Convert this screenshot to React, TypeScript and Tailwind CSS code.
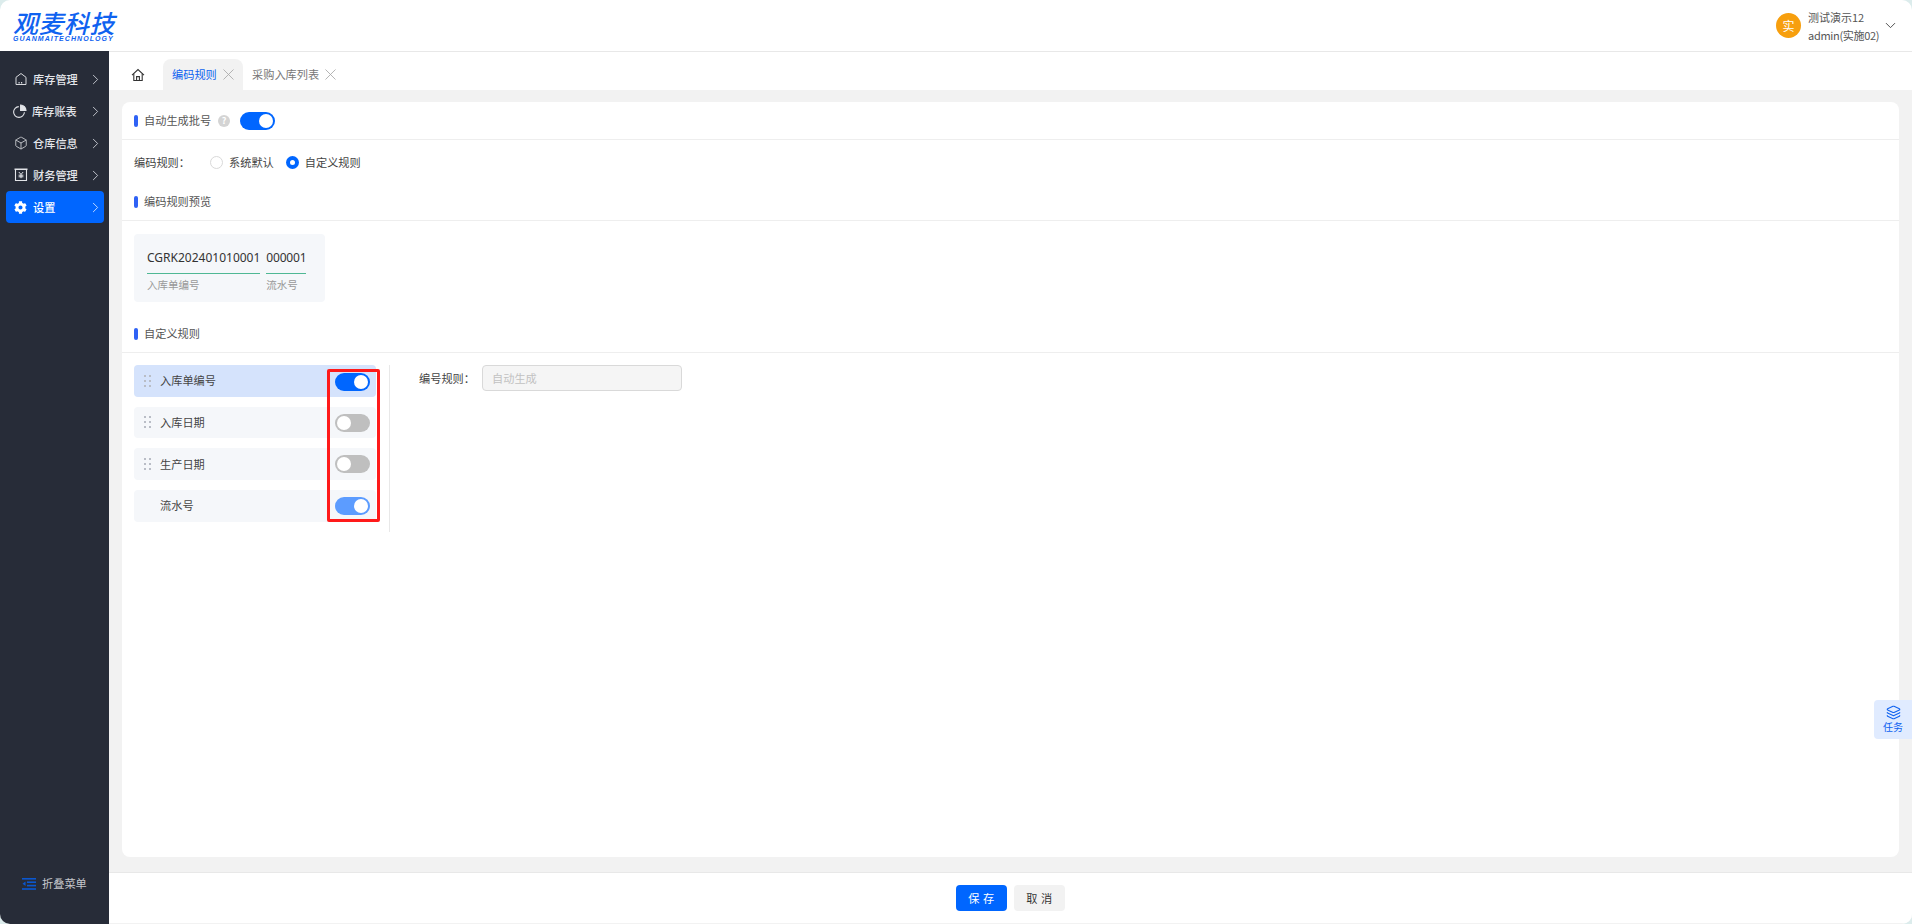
import { ChevronDown, ChevronRight, Box, Layers, X } from 'lucide-react';
import { FaCog } from 'react-icons/fa';

const font = { fontFamily: '"Noto Sans CJK SC", "Noto Sans", sans-serif' };

function Toggle({ on, soft }: { on: boolean; soft?: boolean }) {
  const track = on ? (soft ? 'bg-[#5c9cff] justify-end' : 'bg-[#0066ff] justify-end') : 'bg-[#bfbfbf] justify-start';
  return (
    <div className={`flex h-[18px] w-[35px] items-center rounded-full px-[2px] ${track}`}>
      <div className="h-[14px] w-[14px] rounded-full bg-white" />
    </div>
  );
}

function SectionTitle({ title, h, children }: { title: string; h: string; children?: React.ReactNode }) {
  return (
    <div className={`flex items-center border-b border-[#eeeeee] pl-3 ${h}`}>
      <div className="h-3 w-1 rounded-sm bg-[#2f62f5]" />
      <span className="ml-[6px] text-[11.2px] text-[#555]">{title}</span>
      {children}
    </div>
  );
}

function LedgerIcon() {
  return (
    <svg width="14" height="14" viewBox="0 0 14 14" fill="none" stroke="#e2e4e8" strokeWidth="1.1">
      <path d="M0.5 1.2h13" strokeWidth="1.6" />
      <path d="M1.5 1.2v11.3h11V1.2" />
      <path d="M4.8 4L7 6.4 9.2 4M7 6.4v3.8M4.6 7.2h4.8M4.6 8.8h4.8" strokeWidth="1" />
    </svg>
  );
}

function StoreIcon() {
  return (
    <svg width="14" height="14" viewBox="0 0 14 14" fill="none" stroke="#d8dade" strokeWidth="1">
      <path d="M2 12.5V5.3L7 1.5l5 3.8v7.2z" strokeLinejoin="round" />
      <path d="M4.5 10.7h1.2M7 10.7h1.2" strokeWidth="1.4" />
    </svg>
  );
}

function PieIcon() {
  return (
    <svg width="14" height="14" viewBox="0 0 14 14" fill="none" stroke="#e2e4e8" strokeWidth="1.1">
      <path d="M5.8 2.6A5.4 5.4 0 1 0 11.4 8.2" />
      <path d="M7.6 1a5.4 5.4 0 0 1 5.4 5.4H7.6z" fill="#e2e4e8" />
    </svg>
  );
}

function HomeIcon() {
  return (
    <svg width="14" height="14" viewBox="0 0 14 14" fill="none" stroke="#333" strokeWidth="1.1">
      <path d="M1 7.2L7 1.6l6 5.6" />
      <path d="M2.8 5.8v6.7h8.4V5.8" />
      <path d="M5.6 12.5V8.6h2.8v3.9" />
    </svg>
  );
}

function FoldIcon() {
  return (
    <svg width="14" height="12" viewBox="0 0 14 12" fill="#0b57cf">
      <rect x="0" y="0" width="14" height="1.6" />
      <rect x="5" y="3.4" width="9" height="1.6" />
      <rect x="5" y="6.8" width="9" height="1.6" />
      <rect x="0" y="10.2" width="14" height="1.6" />
      <path d="M3.5 3.6v4.4L0.5 5.8z" />
    </svg>
  );
}

function DragDots() {
  return (
    <div className="grid w-[7px] grid-cols-2 gap-x-[3px] gap-y-[3px]">
      {[0, 1, 2, 3, 4, 5].map(i => (
        <div key={i} className="h-[2px] w-[2px] bg-[#b9bdc6]" />
      ))}
    </div>
  );
}

const menus = [
  { label: '库存管理', icon: <StoreIcon />, iconW: 'w-[19px]' },
  { label: '库存账表', icon: <PieIcon />, iconW: 'w-[19px] -ml-px' },
  { label: '仓库信息', icon: <Box size={14} color="#d8dade" strokeWidth={1.4} />, iconW: 'w-[19px]' },
  { label: '财务管理', icon: <LedgerIcon />, iconW: 'w-[19px]' },
];

const rules = [
  { label: '入库单编号', on: true, active: true, drag: true, nudge: 'mt-[2px]' },
  { label: '入库日期', on: false, drag: true, nudge: 'mt-[2px]' },
  { label: '生产日期', on: false, drag: true, nudge: '' },
  { label: '流水号', on: true, soft: true, nudge: '' },
];

export default function App() {
  return (
    <div className="h-screen w-full overflow-hidden bg-[#dcecec]" style={font}>
      <div className="flex h-full flex-col overflow-hidden rounded-[10px] bg-white">
        {/* header */}
        <div className="flex h-[52px] shrink-0 items-center justify-between border-b border-[#e8e8e8] pl-[13px] pr-[13px]">
          <div className="flex w-[104px] flex-col italic text-[#0f62f0]">
            <span className="whitespace-nowrap text-[25px] leading-[25px] font-medium tracking-[0.5px]">观麦科技</span>
            <span className="whitespace-nowrap text-[7px] leading-[7px] font-bold tracking-[1.05px]" style={{ fontFamily: '"Liberation Sans", sans-serif' }}>
              GUANMAITECHNOLOGY
            </span>
          </div>
          <div className="flex items-center">
            <div className="flex h-[25px] w-[25px] items-center justify-center rounded-full bg-[#f79f0e] text-xs text-white">实</div>
            <div className="ml-[7px] flex w-[72px] flex-col whitespace-nowrap text-[11px] leading-[18px] text-[#555]">
              <span>测试演示12</span>
              <span className="tracking-[-0.3px]">admin(实施02)</span>
            </div>
            <ChevronDown size={17} className="ml-[2px] text-[#444]" strokeWidth={1.3} />
          </div>
        </div>

        <div className="flex min-h-0 flex-1">
          {/* sidebar */}
          <div className="relative -mt-px flex w-[109px] shrink-0 flex-col justify-between bg-[#272c38] pb-[32px] pl-[6px] pr-[5px] pt-[12px]">
            <div className="flex flex-col">
              {menus.map(m => (
                <div key={m.label} className="flex h-8 items-center pl-2 text-[11.2px] font-medium text-[#e4e6ea]">
                  <span className={`flex shrink-0 ${m.iconW}`}>{m.icon}</span>
                  <span className="flex-1">{m.label}</span>
                  <ChevronRight size={17} strokeWidth={1.3} className="text-[#c9ccd2]" />
                </div>
              ))}
              <div className="flex h-8 items-center rounded bg-[#0066ff] pl-2 text-[11.2px] font-medium text-white">
                <span className="flex w-[19px] shrink-0">
                  <FaCog size={13} />
                </span>
                <span className="flex-1">设置</span>
                <ChevronRight size={17} strokeWidth={1.3} className="text-[#cfe0ff]" />
              </div>
            </div>
            <div className="flex items-center pl-[16px] text-[11.2px] text-[#c5c7cc]">
              <FoldIcon />
              <span className="ml-[6px]">折叠菜单</span>
            </div>
          </div>

          <div className="flex min-w-0 flex-1 flex-col bg-[#f2f2f2]">
            {/* tabs */}
            <div className="flex h-[38px] shrink-0 items-end bg-white pl-[22px]">
              <div className="flex h-[31px] w-[32px] items-center">
                <HomeIcon />
              </div>
              <div className="flex h-[31px] w-[80px] items-center rounded-t-lg bg-[#f2f2f2] pl-[9px] text-[11.2px] text-[#0f62f0]">
                <span>编码规则</span>
                <X size={19} strokeWidth={1.1} className="ml-[2px] text-[#aaa]" />
              </div>
              <div className="flex h-[31px] w-[102px] items-center pl-[9px] text-[11.2px] text-[#777]">
                <span>采购入库列表</span>
                <X size={19} strokeWidth={1.1} className="ml-[2px] text-[#aaa]" />
              </div>
            </div>

            {/* content */}
            <div className="relative min-h-0 flex-1 pl-[13px] pr-[13px] pt-[12px]">
              <div className="h-[755px] rounded-lg bg-white">
                <SectionTitle title="自动生成批号" h="h-[38px]">
                  <div className="ml-[7px] flex h-[12px] w-[12px] items-center justify-center rounded-full bg-[#d4d4d4] text-[9px] font-bold text-white">?</div>
                  <div className="ml-[10px]">
                    <Toggle on />
                  </div>
                </SectionTitle>

                <div className="flex h-[44px] items-center pl-3 text-[11.2px] text-[#444]">
                  <span className="w-[76px]">编码规则：</span>
                  <div className="h-[13px] w-[13px] rounded-full border border-[#d9d9d9]" />
                  <span className="ml-[6px]">系统默认</span>
                  <div className="ml-[12px] flex h-[13px] w-[13px] items-center justify-center rounded-full bg-[#0066ff]">
                    <div className="h-[5px] w-[5px] rounded-full bg-white" />
                  </div>
                  <span className="ml-[6px]">自定义规则</span>
                </div>

                <SectionTitle title="编码规则预览" h="h-[37px] pb-[1px]" />

                <div className="pl-3 pt-[13px]">
                  <div className="flex h-[68px] w-[191px] gap-[6px] rounded bg-[#f5f7fa] pl-[13px] pt-[13px]">
                    <div className="flex flex-col">
                      <span className="border-b border-[#4fb894] pb-[4px] text-xs leading-[22px] text-[#333]" style={{ fontFamily: '"Noto Sans", sans-serif' }}>
                        CGRK202401010001
                      </span>
                      <span className="mt-[4px] text-[10.5px] leading-[14px] text-[#999]">入库单编号</span>
                    </div>
                    <div className="flex w-[40px] flex-col">
                      <span className="border-b border-[#4fb894] pb-[4px] text-xs leading-[22px] tracking-[-0.2px] text-[#333]" style={{ fontFamily: '"Noto Sans", sans-serif' }}>
                        000001
                      </span>
                      <span className="mt-[4px] text-[10.5px] leading-[14px] text-[#999]">流水号</span>
                    </div>
                  </div>
                </div>

                <div className="mt-[14px]">
                  <SectionTitle title="自定义规则" h="h-[37px] pb-[1px]" />
                </div>

                <div className="flex pl-3 pt-3">
                  <div className="relative flex w-[256px] border-r border-[#e8e8e8] pb-[10px]">
                    <div className="flex w-[242px] flex-col gap-[10px]">
                      {rules.map(r => (
                        <div key={r.label} className={`flex h-[31.67px] items-center rounded pr-[6px] ${r.active ? 'bg-[#d5e3fc]' : 'bg-[#f5f7fa]'}`}>
                          <div className="flex w-[26px] justify-end pr-[9px]">{r.drag && <DragDots />}</div>
                          <span className="flex-1 text-[11.2px] text-[#444]">{r.label}</span>
                          <div className={r.nudge}>
                            <Toggle on={r.on} soft={r.soft} />
                          </div>
                        </div>
                      ))}
                    </div>
                    {/* annotation drawn on top of the screenshot */}
                    <div className="absolute left-[193px] top-[4px] h-[153px] w-[53px] rounded-[2px] border-[3px] border-[#ff1a1a]" />
                  </div>
                  <div className="flex h-[26px] items-center pl-[29px] text-[11.2px] text-[#444]">
                    <span className="w-[63px]">编号规则：</span>
                    <div className="flex h-[26px] w-[200px] items-center rounded border border-[#d9d9d9] bg-[#f5f5f5] pl-[9px] text-[#c2c2c2]">
                      自动生成
                    </div>
                  </div>
                </div>
              </div>

              {/* floating task tab */}
              <div className="absolute right-0 top-[610px] flex h-[39px] w-[38px] flex-col items-center justify-center rounded-l bg-[#e0ebff] text-[#0f62f0]">
                <Layers size={15} strokeWidth={1.8} />
                <span className="text-[10px] leading-[14px]">任务</span>
              </div>
            </div>

            {/* footer */}
            <div className="mb-[1px] flex h-[51px] shrink-0 items-center justify-center gap-[7px] border-t border-[#e8e8e8] bg-white text-[11.2px]">
              <button className="h-[26px] w-[51px] rounded bg-[#0066ff] pl-[3px] tracking-[3.5px] text-white">保存</button>
              <button className="h-[26px] w-[51px] rounded bg-[#f2f2f2] pl-[3px] tracking-[3.5px] text-[#333]">取消</button>
            </div>
          </div>
        </div>
      </div>
    </div>
  );
}
